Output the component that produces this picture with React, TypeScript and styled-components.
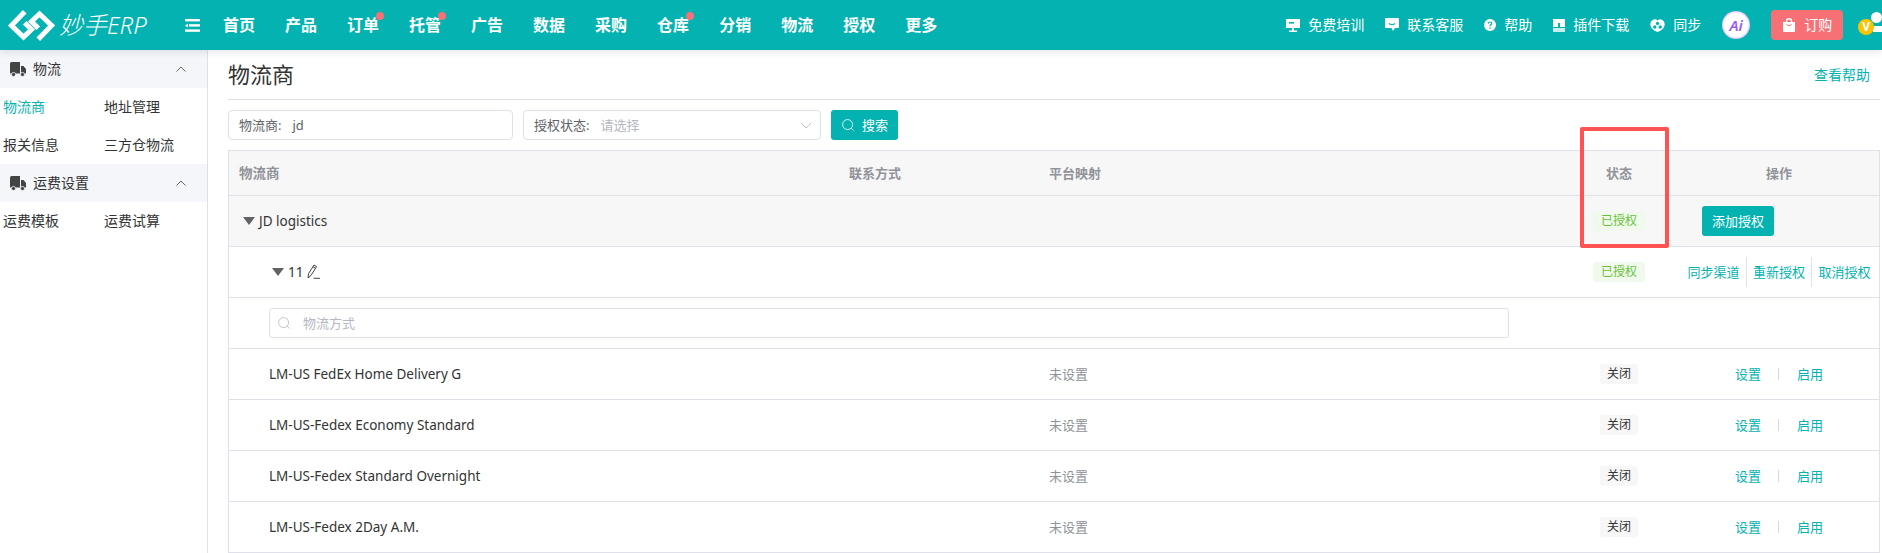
import { createGlobalStyle, styled } from 'styled-components';

const TEAL = '#04b3b1';
const LINE = '#e0e0e8';

const GlobalStyle = createGlobalStyle`
  html, body {
    margin: 0;
    padding: 0;
    height: 100%;
    overflow: hidden;
    background: #fff;
  }

  body {
    font-family: "Noto Sans", "Noto Sans CJK SC", sans-serif;
    font-size: 13px;
    line-height: 1.4;
    color: #333;
  }
`;

const NAV_ITEMS = [
  { label: '首页' },
  { label: '产品' },
  { label: '订单', dot: true },
  { label: '托管', dot: true },
  { label: '广告' },
  { label: '数据' },
  { label: '采购' },
  { label: '仓库', dot: true },
  { label: '分销' },
  { label: '物流' },
  { label: '授权' },
  { label: '更多' },
];

const METHODS = [
  'LM-US FedEx Home Delivery G',
  'LM-US-Fedex Economy Standard',
  'LM-US-Fedex Standard Overnight',
  'LM-US-Fedex 2Day A.M.',
];

const LogoMark = () => (
  <svg width="47" height="33" viewBox="0 0 47 33" fill="none" stroke="#fff" strokeWidth="5" strokeLinecap="square">
    <path d="M15 4.5 L3.4 16.5 L15.5 28 L23.5 20.5 L18.5 15.5" />
    <path d="M32 28.5 L43.6 16.5 L31.5 5 L23.5 12.5 L28.5 17.5" />
  </svg>
);

const MenuFold = () => (
  <svg width="15" height="13" viewBox="0 0 15 13" fill="#fff">
    <rect x="0" y="0" width="15" height="2.4" />
    <rect x="4" y="5.2" width="11" height="2.4" />
    <rect x="0" y="10.4" width="15" height="2.4" />
    <path d="M0 6.4 L3 4.4 V8.4 Z" />
  </svg>
);

const Truck = () => (
  <svg width="16" height="15" viewBox="0 0 16 15" fill="#444">
    <path d="M0 1.5 Q0 0 1.5 0 H10 V11.5 H0 Z" />
    <path d="M11 4 H13.5 L16 7 V11.5 H11 Z" />
    <circle cx="3.5" cy="12.5" r="2.1" stroke="#f5f6fa" strokeWidth="0.8" />
    <circle cx="12.5" cy="12.5" r="2.1" stroke="#f5f6fa" strokeWidth="0.8" />
  </svg>
);

const ChevronUp = () => (
  <svg width="10" height="6" viewBox="0 0 10 6" fill="none" stroke="#666" strokeWidth="1">
    <path d="M0.5 5.5 L5 1 L9.5 5.5" />
  </svg>
);

const ChevronDown = () => (
  <svg width="12" height="7" viewBox="0 0 12 7" fill="none" stroke="#c0c4cc" strokeWidth="1">
    <path d="M1 1 L6 6 L11 1" />
  </svg>
);

const SearchGlyph = ({ color }: { color: string }) => (
  <svg width="12" height="12" viewBox="0 0 12 12" fill="none" stroke={color} strokeWidth="1">
    <circle cx="5.6" cy="5.6" r="5" />
    <path d="M9.3 9.3 L11.5 11.5" />
  </svg>
);

const Caret = () => (
  <svg width="12" height="8" viewBox="0 0 12 8" fill="#606266">
    <path d="M0 0 H12 L6 8 Z" />
  </svg>
);

const Pencil = () => (
  <svg width="13" height="15" viewBox="0 0 13 15" fill="none" stroke="#444" strokeWidth="1">
    <path d="M1 14 L1.6 9.5 L7 1 L9.6 2.6 L4 11.4 Z" />
    <path d="M6 2.8 L8.6 4.4" />
    <path d="M6.5 14.3 H13" />
  </svg>
);

const TrainingIcon = () => (
  <svg width="14" height="15" viewBox="0 0 14 15" fill="#fff">
    <path d="M0 1 H14 V10 H8 V12.5 H11 V14 H3 V12.5 H6 V10 H0 Z" />
    <rect x="3" y="4" width="5" height="1.6" fill="#04b3b1" />
  </svg>
);

const ServiceIcon = () => (
  <svg width="14" height="14" viewBox="0 0 14 14" fill="#fff">
    <path d="M1 0 H13 Q14 0 14 1 V10 H10 L8 13 L6.5 10 H1 Q0 10 0 9 V1 Q0 0 1 0 Z" />
    <path d="M4 5.5 Q7 8 10 5.5" fill="none" stroke="#04b3b1" strokeWidth="1.1" />
  </svg>
);

const HelpIcon = () => (
  <svg width="12" height="12" viewBox="0 0 12 12">
    <circle cx="6" cy="6" r="6" fill="#fff" />
    <path d="M4.2 4.6 Q4.4 3 6 3 Q7.8 3 7.8 4.5 Q7.8 5.4 6.8 5.9 Q6 6.3 6 7.2" fill="none" stroke="#04b3b1" strokeWidth="1.2" />
    <circle cx="6" cy="9" r="0.8" fill="#04b3b1" />
  </svg>
);

const PluginIcon = () => (
  <svg width="12" height="13" viewBox="0 0 12 13">
    <rect width="12" height="8" fill="#fff" />
    <rect y="9" width="12" height="4" fill="#c8eeed" />
    <rect x="5" y="4" width="2" height="5" fill="#04b3b1" />
  </svg>
);

const SyncIcon = () => (
  <svg width="15" height="13" viewBox="0 0 15 13">
    <path d="M7.5 13 Q2 11 0.6 7 Q-0.6 2.5 3 0.8 Q5.6 -0.4 7.5 1.4 Q9.4 -0.4 12 0.8 Q15.6 2.5 14.4 7 Q13 11 7.5 13 Z" fill="#fff" />
    <circle cx="7.5" cy="4.4" r="1.7" fill="#04b3b1" />
    <circle cx="4.8" cy="8" r="1.7" fill="#04b3b1" />
    <circle cx="10.2" cy="8" r="1.7" fill="#04b3b1" />
  </svg>
);

const BagIcon = () => (
  <svg width="12" height="14" viewBox="0 0 12 14" fill="#fff">
    <path d="M0 4 H12 V13 Q12 14 11 14 H1 Q0 14 0 13 Z" />
    <path d="M3.5 4 V3 Q3.5 0.8 6 0.8 Q8.5 0.8 8.5 3 V4" fill="none" stroke="#fff" strokeWidth="1.4" />
    <path d="M3.4 6.5 Q6 9 8.6 6.5" fill="none" stroke="#f77076" strokeWidth="1" />
  </svg>
);

const TOOLS = [
  { label: '免费培训', icon: <TrainingIcon /> },
  { label: '联系客服', icon: <ServiceIcon /> },
  { label: '帮助', icon: <HelpIcon /> },
  { label: '插件下载', icon: <PluginIcon /> },
  { label: '同步', icon: <SyncIcon /> },
];

const App = () => (
  <PageLayout>
    <GlobalStyle />
    <HeaderBar>
      <LogoBox>
        <LogoMark />
        <LogoText>妙手ERP</LogoText>
      </LogoBox>
      <MenuFoldBox>
        <MenuFold />
      </MenuFoldBox>
      <NavList>
        {NAV_ITEMS.map((item) => (
          <NavItem key={item.label}>
            {item.label}
            {item.dot && <NavDot />}
          </NavItem>
        ))}
      </NavList>
      <ToolList>
        {TOOLS.map((tool) => (
          <ToolItem key={tool.label}>
            {tool.icon}
            {tool.label}
          </ToolItem>
        ))}
      </ToolList>
      <AiBadge>
        <AiText>Ai</AiText>
      </AiBadge>
      <OrderButton>
        <BagIcon />
        订购
      </OrderButton>
      <UserBox>
        <UserHead />
        <UserBody />
        <VipBadge>V</VipBadge>
      </UserBox>
    </HeaderBar>

    <BodyBox>
      <SideBar>
        <SideGroup>
          <SideGroupTitle>
            <Truck />
            物流
          </SideGroupTitle>
          <ChevronUp />
        </SideGroup>
        <SideLinks>
          <SideLink $active>物流商</SideLink>
          <SideLink>地址管理</SideLink>
          <SideLink>报关信息</SideLink>
          <SideLink>三方仓物流</SideLink>
        </SideLinks>
        <SideGroup>
          <SideGroupTitle>
            <Truck />
            运费设置
          </SideGroupTitle>
          <ChevronUp />
        </SideGroup>
        <SideLinks>
          <SideLink>运费模板</SideLink>
          <SideLink>运费试算</SideLink>
        </SideLinks>
      </SideBar>

      <MainBox>
        <TitleRow>
          <PageTitle>物流商</PageTitle>
          <HelpLink>查看帮助</HelpLink>
        </TitleRow>

        <FilterRow>
          <FilterInput $width={285}>
            <FilterLabel>物流商:</FilterLabel>
            <FilterValue>jd</FilterValue>
          </FilterInput>
          <FilterInput $width={298}>
            <FilterLabel>授权状态:</FilterLabel>
            <FilterPlaceholder>请选择</FilterPlaceholder>
            <ChevronDown />
          </FilterInput>
          <SearchButton>
            <SearchGlyph color="#d6f3f2" />
            搜索
          </SearchButton>
        </FilterRow>

        <TableBox>
          <HeaderRow>
            <NameCell>物流商</NameCell>
            <span>联系方式</span>
            <span>平台映射</span>
            <CenterCell>状态</CenterCell>
            <CenterCell>操作</CenterCell>
          </HeaderRow>

          <TableRow $shaded>
            <NameCell $indent={14}>
              <Caret />
              JD logistics
            </NameCell>
            <span />
            <span />
            <CenterCell>
              <StatusTag $on>已授权</StatusTag>
            </CenterCell>
            <ActionCell>
              <AddButton>添加授权</AddButton>
            </ActionCell>
          </TableRow>

          <TableRow>
            <NameCell $indent={43}>
              <Caret />
              11
              <Pencil />
            </NameCell>
            <span />
            <span />
            <CenterCell>
              <StatusTag $on>已授权</StatusTag>
            </CenterCell>
            <CenterCell>
              <LinkGroup>
                <TextLink>同步渠道</TextLink>
                <TextLink $divided>重新授权</TextLink>
                <TextLink $divided>取消授权</TextLink>
              </LinkGroup>
            </CenterCell>
          </TableRow>

          <SearchRow>
            <MethodSearch>
              <SearchGlyph color="#c0c4cc" />
              <FilterPlaceholder>物流方式</FilterPlaceholder>
            </MethodSearch>
          </SearchRow>

          {METHODS.map((method) => (
            <TableRow key={method}>
              <NameCell $indent={40}>{method}</NameCell>
              <span />
              <MutedCell>未设置</MutedCell>
              <CenterCell>
                <StatusTag>关闭</StatusTag>
              </CenterCell>
              <CenterCell>
                <TextLink>设置</TextLink>
                <ThinRule />
                <TextLink>启用</TextLink>
              </CenterCell>
            </TableRow>
          ))}
        </TableBox>
      </MainBox>
    </BodyBox>

    <RedMark />
  </PageLayout>
);

export default App;

const PageLayout = styled.div`
  position: relative;
  display: flex;
  flex-direction: column;
  width: 1882px;
  height: 553px;
  overflow: hidden;
`;

const HeaderBar = styled.header`
  position: relative;
  z-index: 2;
  flex: none;
  display: flex;
  align-items: center;
  height: 50px;
  padding-left: 8px;
  background: ${TEAL};
  box-shadow: 0 2px 8px rgba(0, 0, 0, 0.1);
  color: #fff;
`;

const LogoBox = styled.div`
  flex: none;
  display: flex;
  align-items: center;
  gap: 4px;
  width: 177px;
`;

const LogoText = styled.span`
  font-size: 24px;
  font-style: italic;
  font-weight: 300;
  white-space: nowrap;
`;

const MenuFoldBox = styled.div`
  flex: none;
  display: flex;
  width: 38px;
`;

const NavList = styled.nav`
  flex: none;
  display: flex;
  gap: 30px;
`;

const NavItem = styled.span`
  position: relative;
  font-size: 16px;
  font-weight: 700;
  line-height: 22px;
  white-space: nowrap;
`;

const NavDot = styled.i`
  position: absolute;
  top: -2px;
  left: 29px;
  width: 8px;
  height: 8px;
  border-radius: 50%;
  background: #f77076;
`;

const ToolList = styled.div`
  flex: none;
  display: flex;
  gap: 21px;
  margin-left: 349px;
`;

const ToolItem = styled.span`
  display: flex;
  align-items: center;
  gap: 8px;
  font-size: 14px;
  white-space: nowrap;
`;

const AiBadge = styled.div`
  flex: none;
  display: flex;
  justify-content: center;
  align-items: center;
  width: 28px;
  height: 28px;
  margin-left: 21px;
  border-radius: 50%;
  background: radial-gradient(circle, #fff 58%, #b98af5 84%, #e2ccff 100%);
`;

const AiText = styled.span`
  font-size: 15px;
  font-style: italic;
  font-weight: 600;
  color: #9a5cf0;
`;

const OrderButton = styled.button`
  flex: none;
  display: flex;
  align-items: center;
  gap: 9px;
  width: 72px;
  height: 30px;
  margin-left: 21px;
  padding: 0 0 0 12px;
  border: 0;
  border-radius: 4px;
  background: #f77076;
  color: #fff;
  font: inherit;
  font-size: 14px;
`;

const UserBox = styled.div`
  position: relative;
  flex: none;
  width: 24px;
  height: 50px;
  margin-left: 15px;
`;

const UserHead = styled.i`
  position: absolute;
  top: 12px;
  left: 13px;
  width: 11px;
  height: 11px;
  border-radius: 50%;
  background: #fff;
`;

const UserBody = styled.i`
  position: absolute;
  top: 26px;
  left: 15px;
  width: 12px;
  height: 6px;
  background: #fff;
`;

const VipBadge = styled.span`
  position: absolute;
  top: 19px;
  left: 0;
  width: 16px;
  height: 16px;
  border-radius: 50%;
  background: #fbc400;
  color: #fff;
  font-size: 12px;
  font-weight: 700;
  line-height: 16px;
  text-align: center;
`;

const BodyBox = styled.div`
  flex: 1;
  display: flex;
  min-height: 0;
`;

const SideBar = styled.aside`
  flex: none;
  width: 207px;
  border-right: 1px solid ${LINE};
  font-size: 14px;
`;

const SideGroup = styled.div`
  display: flex;
  justify-content: space-between;
  align-items: center;
  height: 38px;
  padding: 0 21px 0 10px;
  background: #f5f6fa;
`;

const SideGroupTitle = styled.div`
  display: flex;
  align-items: center;
  gap: 7px;
  color: #333;
`;

const SideLinks = styled.div`
  display: grid;
  grid-template-columns: 101px 1fr;
  grid-auto-rows: 38px;
  align-items: center;
  padding-left: 3px;
`;

const SideLink = styled.a<{ $active?: boolean }>`
  color: ${({ $active }) => ($active ? TEAL : '#333')};
  white-space: nowrap;
`;

const MainBox = styled.main`
  flex: 1;
  min-width: 0;
  padding: 0 2px 0 20px;
`;

const TitleRow = styled.div`
  display: flex;
  justify-content: space-between;
  align-items: center;
  height: 49px;
  padding-right: 10px;
  border-bottom: 1px solid ${LINE};
`;

const PageTitle = styled.h1`
  margin: 0;
  font-size: 22px;
  font-weight: 400;
  color: #333;
`;

const HelpLink = styled.a`
  font-size: 14px;
  color: ${TEAL};
`;

const FilterRow = styled.div`
  display: flex;
  gap: 10px;
  margin: 10px 0;
`;

const FilterInput = styled.div<{ $width: number }>`
  box-sizing: border-box;
  display: flex;
  align-items: center;
  width: ${({ $width }) => $width}px;
  height: 30px;
  padding: 0 8px 0 10px;
  border: 1px solid ${LINE};
  border-radius: 4px;
`;

const FilterLabel = styled.span`
  margin-right: 11px;
  color: #606266;
  white-space: nowrap;
`;

const FilterValue = styled.span`
  color: #606266;
`;

const FilterPlaceholder = styled.span`
  flex: 1;
  color: #b4b8c0;
`;

const SearchButton = styled.button`
  display: flex;
  align-items: center;
  gap: 8px;
  height: 30px;
  padding: 0 10px 0 11px;
  border: 0;
  border-radius: 3px;
  background: ${TEAL};
  color: #fff;
  font: inherit;
`;

const TableBox = styled.section`
  border: 1px solid ${LINE};
  border-bottom: 0;
`;

const COLUMNS = 'grid-template-columns: 620px 200px 1fr 160px 160px 20px;';

const HeaderRow = styled.div`
  display: grid;
  ${COLUMNS}
  align-items: center;
  height: 44px;
  border-bottom: 1px solid ${LINE};
  background: #f7f7f7;
  color: #909399;
  font-weight: 700;
`;

const TableRow = styled.div<{ $shaded?: boolean }>`
  display: grid;
  ${COLUMNS}
  align-items: center;
  height: 50px;
  border-bottom: 1px solid ${LINE};
  background: ${({ $shaded }) => ($shaded ? '#f7f7f7' : '#fff')};
`;

const SearchRow = styled.div`
  display: flex;
  align-items: center;
  height: 50px;
  padding-left: 40px;
  border-bottom: 1px solid ${LINE};
`;

const NameCell = styled.div<{ $indent?: number }>`
  display: flex;
  align-items: center;
  gap: 4px;
  padding-left: ${({ $indent }) => $indent ?? 10}px;
  font-size: 13.5px;
`;

const MutedCell = styled.span`
  color: #909399;
`;

const CenterCell = styled.div`
  display: flex;
  justify-content: center;
  align-items: center;
  white-space: nowrap;
`;

const ActionCell = styled.div`
  padding-left: 3px;
`;

const StatusTag = styled.span<{ $on?: boolean }>`
  padding: 0 ${({ $on }) => ($on ? 8 : 7)}px;
  border-radius: 3px;
  background: ${({ $on }) => ($on ? '#f0f9eb' : '#f7f7f7')};
  color: ${({ $on }) => ($on ? '#67c23a' : '#333')};
  font-size: 12px;
  line-height: 20px;
`;

const AddButton = styled.button`
  width: 72px;
  height: 30px;
  padding: 0;
  border: 0;
  border-radius: 3px;
  background: ${TEAL};
  color: #fff;
  font: inherit;
`;

const LinkGroup = styled.div`
  display: flex;
  align-items: center;
`;

const TextLink = styled.a<{ $divided?: boolean }>`
  color: ${TEAL};
  ${({ $divided }) =>
    $divided &&
    `
    margin-left: 6px;
    padding-left: 6.5px;
    border-left: 1px solid ${LINE};
    line-height: 30px;
  `}
`;

const ThinRule = styled.i`
  width: 1px;
  height: 12px;
  margin: 0 18px 0 17px;
  background: #d8d8de;
`;

const MethodSearch = styled.div`
  box-sizing: border-box;
  display: flex;
  align-items: center;
  gap: 13px;
  width: 1240px;
  height: 30px;
  padding-left: 8px;
  border: 1px solid ${LINE};
  border-radius: 3px;
`;

const RedMark = styled.div`
  position: absolute;
  top: 127px;
  left: 1580px;
  box-sizing: border-box;
  width: 89px;
  height: 121px;
  border: 4px solid #ff5252;
  border-radius: 2px;
  pointer-events: none;
`;
